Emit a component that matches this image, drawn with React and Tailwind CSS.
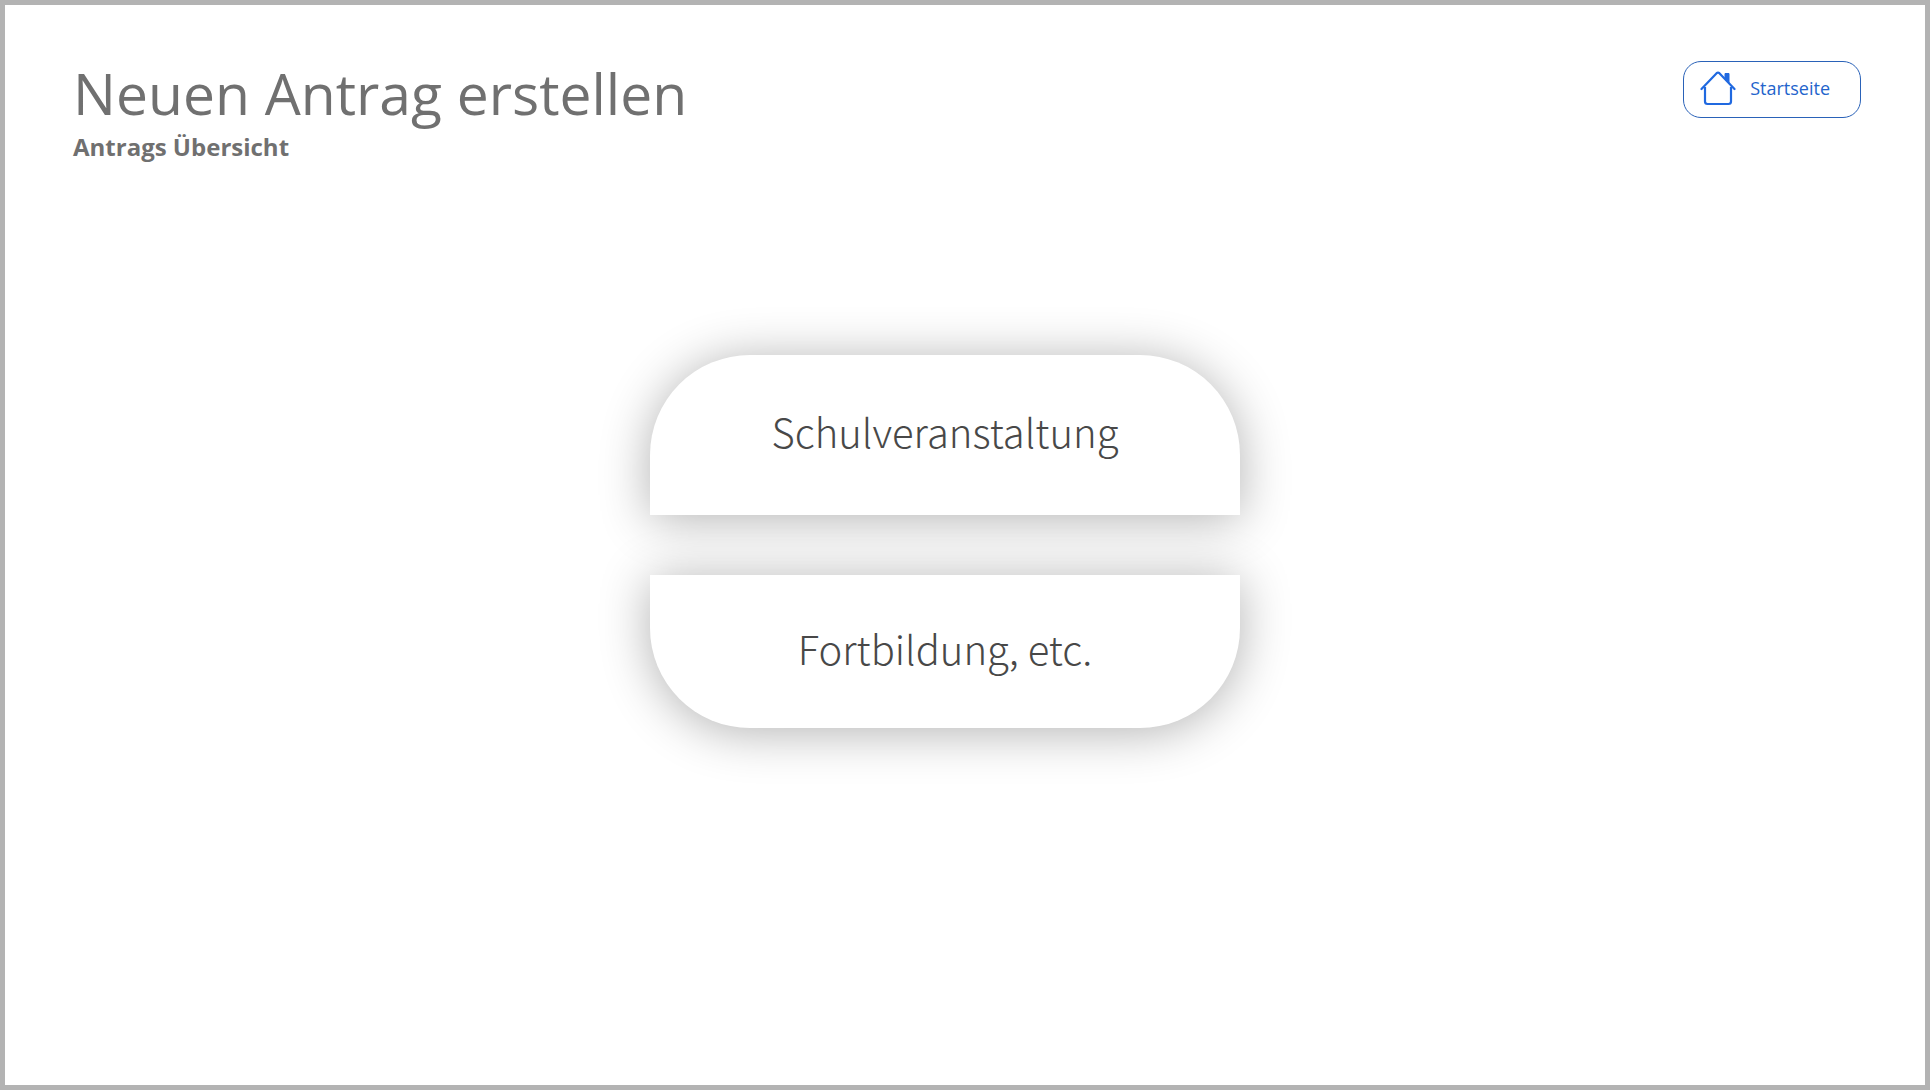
function HomeIcon() {
  return (
    <svg viewBox="0 0 36 36" className="size-9" fill="none" aria-hidden="true">
      <path d="M1.5 19 16.6 3.2Q18 2 19.4 3.2L34.5 19" stroke="#2069e0" strokeWidth="2.2" strokeLinecap="round" strokeLinejoin="round" />
      <path d="M5 17V31.500Q5 34 7.500 34H28.500Q31 34 31 31.500V17" stroke="#2069e0" strokeWidth="2.2" />
      <path d="M25 3.500H29V12.500L25 8.500Z" fill="#2069e0" stroke="#2069e0" strokeWidth="1" strokeLinejoin="round" />
    </svg>
  );
}

const cardStyle =
  "flex w-full items-center justify-center bg-white pb-2 font-['Noto_Sans_CJK_JP',sans-serif] text-[40px] leading-none font-light text-[#484848] shadow-[0_4px_50px_rgba(0,0,0,0.31)]";

export default function App() {
  return (
    <div className="flex min-h-screen flex-col border-[5px] border-[#b3b3b3] bg-white font-['Open_Sans',sans-serif]">
      <header className="flex items-start justify-between pt-14 pr-16 pl-17">
        <div className="text-[#707070]">
          <h1 className="text-[57px] leading-[64px]">Neuen Antrag erstellen</h1>
          <p className="text-2xl leading-[44px] font-bold">Antrags Übersicht</p>
        </div>
        <button type="button" className="flex h-[57px] items-center gap-[14px] rounded-[18px] border border-[#2a62b8] bg-white pr-[30px] pb-1 pl-4 text-lg text-[#2364cc]">
          <HomeIcon />
          Startseite
        </button>
      </header>
      <main className="flex flex-col items-center pt-[186px] pr-10">
        <div className="flex w-full max-w-[590px] flex-col gap-15">
          <button type="button" className={`${cardStyle} h-40 rounded-t-[100px]`}>
            Schulveranstaltung
          </button>
          <button type="button" className={`${cardStyle} h-[153px] rounded-b-[100px]`}>
            Fortbildung, etc.
          </button>
        </div>
      </main>
    </div>
  );
}
